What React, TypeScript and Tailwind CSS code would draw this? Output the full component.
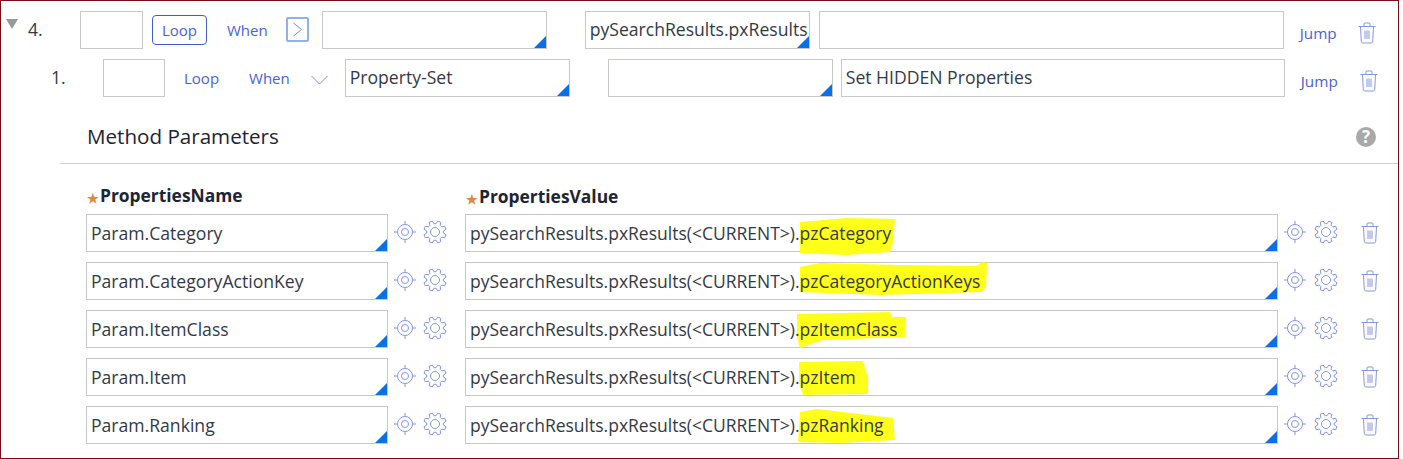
const params = [
  {
    name: 'Param.Category',
    value: 'pzCategory',
    mark: '3,8 50,4 98,5 96,28 93,38 50,41 3,39',
  },
  {
    name: 'Param.CategoryActionKey',
    value: 'pzCategoryActionKeys',
    mark: '3,5 23,1 100,3 180,4 185,0 190,1 189,25 185,30 84,33 3,30',
  },
  {
    name: 'Param.ItemClass',
    value: 'pzItemClass',
    mark: '0,4 93,2 95,7 109,7 108,27 26,30 3,38 0,28',
  },
  {
    name: 'Param.Item',
    value: 'pzItem',
    mark: '2,4 66,3 71,20 71,36 6,37 2,25',
  },
  {
    name: 'Param.Ranking',
    value: 'pzRanking',
    mark: '3,6 20,3 96,12 98,34 43,37 1,36',
  },
];

// 8 tooth gear outline
const gearPath = (() => {
  const pts: string[] = [];
  for (let i = 0; i < 8; i++) {
    const a = (i * Math.PI) / 4 + Math.PI / 8;
    const steps: [number, number][] = [
      [8.4, -0.27],
      [11.3, -0.14],
      [11.3, 0.14],
      [8.4, 0.27],
    ];
    for (const [r, d] of steps) {
      pts.push(`${(12 + r * Math.cos(a + d)).toFixed(2)} ${(12 + r * Math.sin(a + d)).toFixed(2)}`);
    }
  }
  return `M${pts.join('L')}Z`;
})();

function Corner() {
  return (
    <span className="absolute right-0 bottom-0 w-0 h-0 border-l-[12px] border-l-transparent border-b-[12px] border-b-[#0b6fe8]" />
  );
}

function Field({ width, text, corner = true, leading = 'leading-[35px]' }: { width: string; text?: string; corner?: boolean; leading?: string }) {
  return (
    <div className={`${width} ${leading} relative h-[38px] shrink-0 border border-[#c9c9c5] bg-white pl-[4px] text-[17.6px] whitespace-nowrap overflow-hidden`}>
      {text}
      {corner && <Corner />}
    </div>
  );
}

function TrashIcon() {
  return (
    <svg width="18" height="22" viewBox="0 0 18 22" fill="none" stroke="#8596e6" strokeWidth="1">
      <path d="M0.5 4.5h17M6 4.5V2a1 1 0 0 1 1-1h4a1 1 0 0 1 1 1v2.5" />
      <path d="M2.5 4.5l.8 15a1.5 1.5 0 0 0 1.5 1.5h8.4a1.5 1.5 0 0 0 1.5-1.5l.8-15" />
      <path d="M7 8.5v8.5M9 8.5v8.5M11 8.5v8.5" />
    </svg>
  );
}

function TargetIcon() {
  return (
    <svg width="22" height="22" viewBox="0 0 22 22" fill="none" stroke="#8596e6" strokeWidth="1">
      <circle cx="11" cy="11" r="7.5" />
      <circle cx="11" cy="11" r="3.5" />
      <path d="M11 0v3.5M11 18.5V22M0 11h3.5M18.5 11H22" />
    </svg>
  );
}

function GearIcon() {
  return (
    <svg width="24" height="24" viewBox="0 0 24 24" fill="none" stroke="#8596e6" strokeWidth="1">
      <path d={gearPath} />
      <circle cx="12" cy="12" r="4.5" />
    </svg>
  );
}

function Jump() {
  return <span className="text-[15.3px] text-[#4a62d8]">Jump</span>;
}

function Required({ label }: { label: string }) {
  return (
    <div className="flex items-center text-[17.4px] font-bold text-[#1d2433]">
      <span className="text-[#d98a45] text-[13px] leading-none mt-[6px] ml-[1px] mr-[1px]">★</span>
      {label}
    </div>
  );
}

export default function App() {
  return (
    <div className="w-[1403px] h-[459px] bg-white overflow-hidden font-['Open_Sans',sans-serif] text-[#333a47]">
      <div className="w-[1399px] h-[459px] border border-[#7a0c12] pl-px pt-px overflow-hidden">
        {/* Step 4 */}
        <div className="flex items-center h-[37px] mt-[9px]">
          <svg width="12" height="10" viewBox="0 0 12 10" className="ml-[4px] mb-[12px] shrink-0">
            <path d="M0 0h12L6 10z" fill="#9a9a9a" />
          </svg>
          <span className="ml-[10px] w-[52px] text-[17.6px]">4.</span>
          <Field width="w-[63px]" corner={false} />
          <span className="ml-[9px] w-[55px] h-[30px] shrink-0 border border-[#3f5fc8] rounded-[4px] text-center text-[15px] leading-[28px] text-[#4a62d8]">Loop</span>
          <span className="ml-[20px] mt-[2px] text-[15px] text-[#4a62d8]">When</span>
          <span className="ml-[18px] mr-[13px] w-[23px] h-[25px] flex items-center justify-center border-2 border-[#8fb2ec] rounded-[2px] shrink-0">
            <svg width="11" height="15" viewBox="0 0 11 15" fill="none" stroke="#7f8dd8" strokeWidth="1">
              <path d="M1.5 1l8 6.5-8 6.5" />
            </svg>
          </span>
          <Field width="w-[225px]" />
          <div className="w-[38px] shrink-0" />
          <Field width="w-[225px]" text="pySearchResults.pxResults" />
          <div className="w-[9px] shrink-0" />
          <Field width="w-[465px]" corner={false} />
          <span className="ml-[16px] mt-[6px]"><Jump /></span>
          <span className="ml-[21px] mt-[6px]"><TrashIcon /></span>
        </div>

        {/* Step 4.1 */}
        <div className="flex items-center h-[37px] mt-[11px]">
          <span className="ml-[49px] w-[52px] text-[17.6px]">1.</span>
          <Field width="w-[62px]" corner={false} />
          <span className="ml-[19px] mt-[2px] text-[15px] text-[#4a62d8]">Loop</span>
          <span className="ml-[30px] mt-[2px] text-[15px] text-[#4a62d8]">When</span>
          <svg width="17" height="10" viewBox="0 0 17 10" fill="none" stroke="#7f8dd8" strokeWidth="1" className="ml-[21px] mr-[17px] mt-[4px] shrink-0">
            <path d="M0.5 1l8 8 8-8" />
          </svg>
          <Field width="w-[225px]" text="Property-Set" />
          <div className="w-[38px] shrink-0" />
          <Field width="w-[225px]" />
          <div className="w-[8px] shrink-0" />
          <Field width="w-[444px]" text="Set HIDDEN Properties" corner={false} />
          <span className="ml-[16px] mt-[7px]"><Jump /></span>
          <span className="ml-[22px] mt-[7px]"><TrashIcon /></span>
        </div>

        {/* Method Parameters */}
        <div className="ml-[58px] mt-[16px] h-[52px] border-b border-[#cfcfcf] flex items-center justify-between pl-[27px] pr-[22px]">
          <h2 className="text-[20.6px] font-medium text-[#1d2433] mb-[3px]">Method Parameters</h2>
          <span className="w-[20px] h-[20px] rounded-full bg-[#a9a9a9] text-white text-[17px] font-bold leading-[20px] text-center mb-[2px]">?</span>
        </div>

        <div className="flex ml-[84px] mt-[18px] h-[28px]">
          <div className="w-[379px]"><Required label="PropertiesName" /></div>
          <Required label="PropertiesValue" />
        </div>

        <div className="ml-[84px] mt-[4px] flex flex-col gap-[10px]">
          {params.map((p) => (
            <div key={p.name} className="flex items-center h-[38px]">
              <Field width="w-[302px]" text={p.name} leading="leading-[37px]" />
              <span className="ml-[6px] mb-[2px]"><TargetIcon /></span>
              <span className="ml-[7px] mb-[2px]"><GearIcon /></span>
              <div className="ml-[18px] relative w-[813px] h-[38px] shrink-0 border border-[#c9c9c5] bg-white pl-[4px] text-[17.5px] leading-[37px] whitespace-nowrap">
                <svg width="200" height="42" viewBox="0 0 200 42" className="absolute left-[331px] -top-[1px] overflow-visible">
                  <polygon points={p.mark} fill="#ffff1a" />
                </svg>
                <span className="relative">pySearchResults.pxResults(&lt;CURRENT&gt;).{p.value}</span>
                <Corner />
              </div>
              <span className="ml-[6px] mb-[2px]"><TargetIcon /></span>
              <span className="ml-[8px] mb-[2px]"><GearIcon /></span>
              <span className="ml-[23px]"><TrashIcon /></span>
            </div>
          ))}
        </div>
      </div>
    </div>
  );
}
